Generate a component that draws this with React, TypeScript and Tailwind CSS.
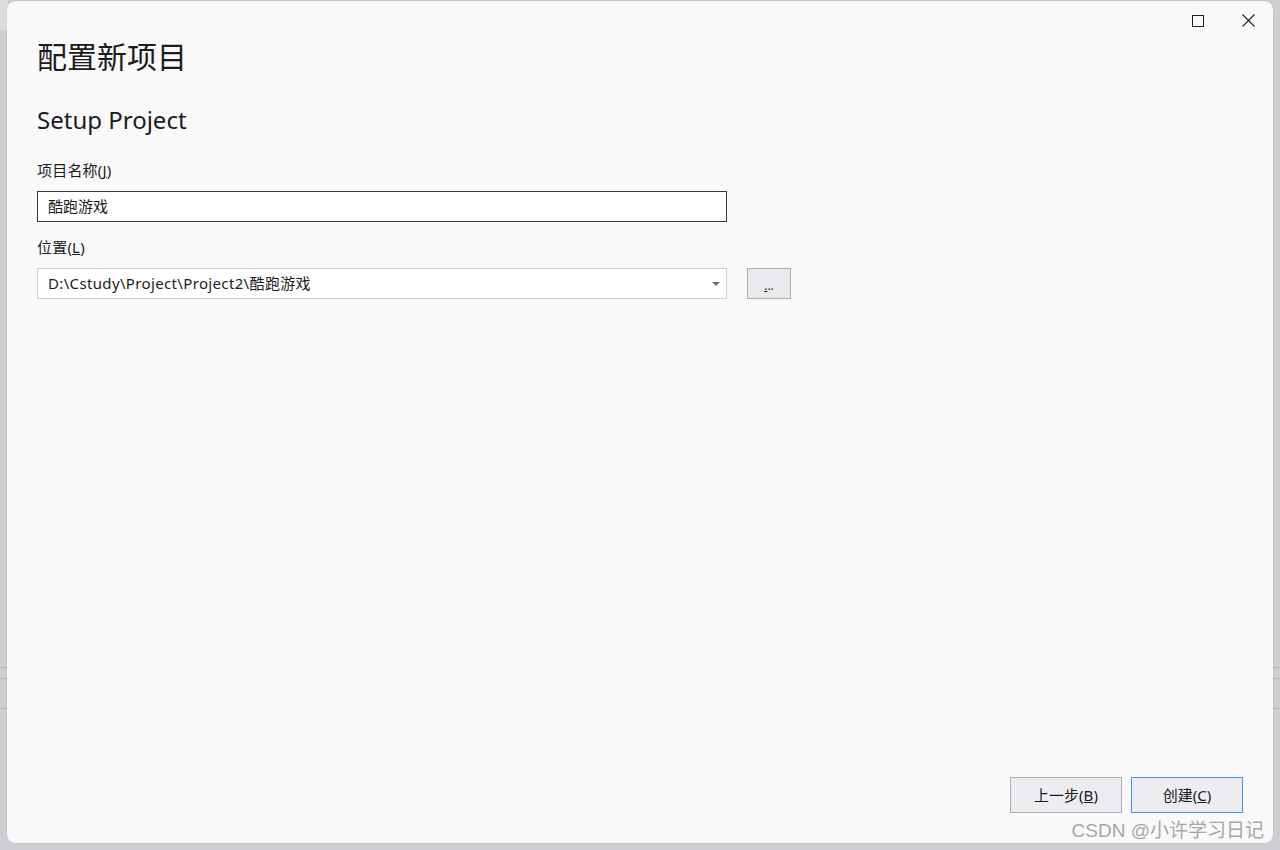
const font = "font-['Segoe_UI','Noto_Sans','Noto_Sans_CJK_SC',sans-serif]";

export default function App() {
  return (
    <div className={`relative w-[1280px] h-[850px] overflow-hidden bg-[#cdcdd2] ${font}`}>
      {/* window behind the dialog */}
      <div className="absolute left-0 top-0 w-[8px] h-[30px] bg-[#dcdce0]" />
      <div className="absolute left-0 top-[667px] w-full h-px bg-[#b4b4b8]" />
      <div className="absolute left-0 top-[678px] w-full h-px bg-[#b4b4b8]" />
      <div className="absolute left-0 top-[708px] w-full h-px bg-[#b4b4b8]" />

      <div className="pl-[7px] pt-px">
        <div className="relative w-[1266px] h-[842px] bg-[#f9f9fa] rounded-[8px] shadow-[0_0_1px_rgba(0,0,0,0.3)] flex flex-col">
          {/* title bar buttons */}
          <div className="absolute top-[13px] right-[18px] flex items-center gap-[38px]">
            <div className="w-[12px] h-[12px] border border-[#1e1e1e]" />
            <svg width="13" height="13" viewBox="0 0 13 13" className="text-[#1e1e1e]">
              <path d="M0.5 0.5 L12.5 12.5 M12.5 0.5 L0.5 12.5" stroke="currentColor" strokeWidth="1.1" />
            </svg>
          </div>

          <div className="pl-[30px] pt-[36px] flex-1">
            <h1 className="text-[30px] leading-[40px] text-[#1b1b1b] font-normal">配置新项目</h1>
            <h2 className="mt-[27px] text-[24px] leading-[32px] text-[#1b1b1b]">Setup Project</h2>

            <div className="mt-[24px] text-[15px] leading-[20px] text-[#1b1b1b] tracking-[0.2px]">
              项目名称(<span className="underline">J</span>)
            </div>
            <div className="mt-[11px] w-[690px] h-[31px] border border-[#3a3a3a] bg-white flex items-center px-[10px] text-[15px] text-[#1b1b1b]">
              酷跑游戏
            </div>

            <div className="mt-[15px] text-[15px] leading-[20px] text-[#1b1b1b] tracking-[0.2px]">
              位置(<span className="underline">L</span>)
            </div>
            <div className="mt-[11px] flex items-center gap-[20px]">
              <div className="w-[690px] h-[31px] border border-[#cfcfe0] bg-white flex items-center justify-between pl-[10px] pr-[6px] text-[15px] text-[#1b1b1b]">
                <span className="tracking-[0.35px]">D:\Cstudy\Project\Project2\酷跑游戏</span>
                <svg width="8" height="4" viewBox="0 0 8 4">
                  <path d="M0 0 H8 L4 4 Z" fill="#6e6e6e" />
                </svg>
              </div>
              <div className="w-[44px] h-[31px] border border-[#adadad] bg-[#e9e9ee] flex items-end justify-center pb-[6px] text-[12px] leading-[12px] text-[#1b1b1b]">
                <span className="underline">.</span>..
              </div>
            </div>
          </div>

          <div className="flex justify-end gap-[9px] pr-[30px] pb-[30px]">
            <button className="w-[112px] h-[36px] border border-[#adadad] bg-[#ededf1] text-[15px] text-[#1b1b1b]">
              上一步(<span className="underline">B</span>)
            </button>
            <button className="w-[112px] h-[36px] border border-[#3d95ee] bg-[#ededf1] text-[15px] text-[#1b1b1b]">
              创建(<span className="underline">C</span>)
            </button>
          </div>

          <div className="absolute right-[9px] bottom-[1px] text-[19px] leading-[22px] text-[#a6a6a6] font-['Liberation_Sans','Noto_Sans_CJK_SC',sans-serif]">
            CSDN @小许学习日记
          </div>
        </div>
      </div>
    </div>
  );
}
